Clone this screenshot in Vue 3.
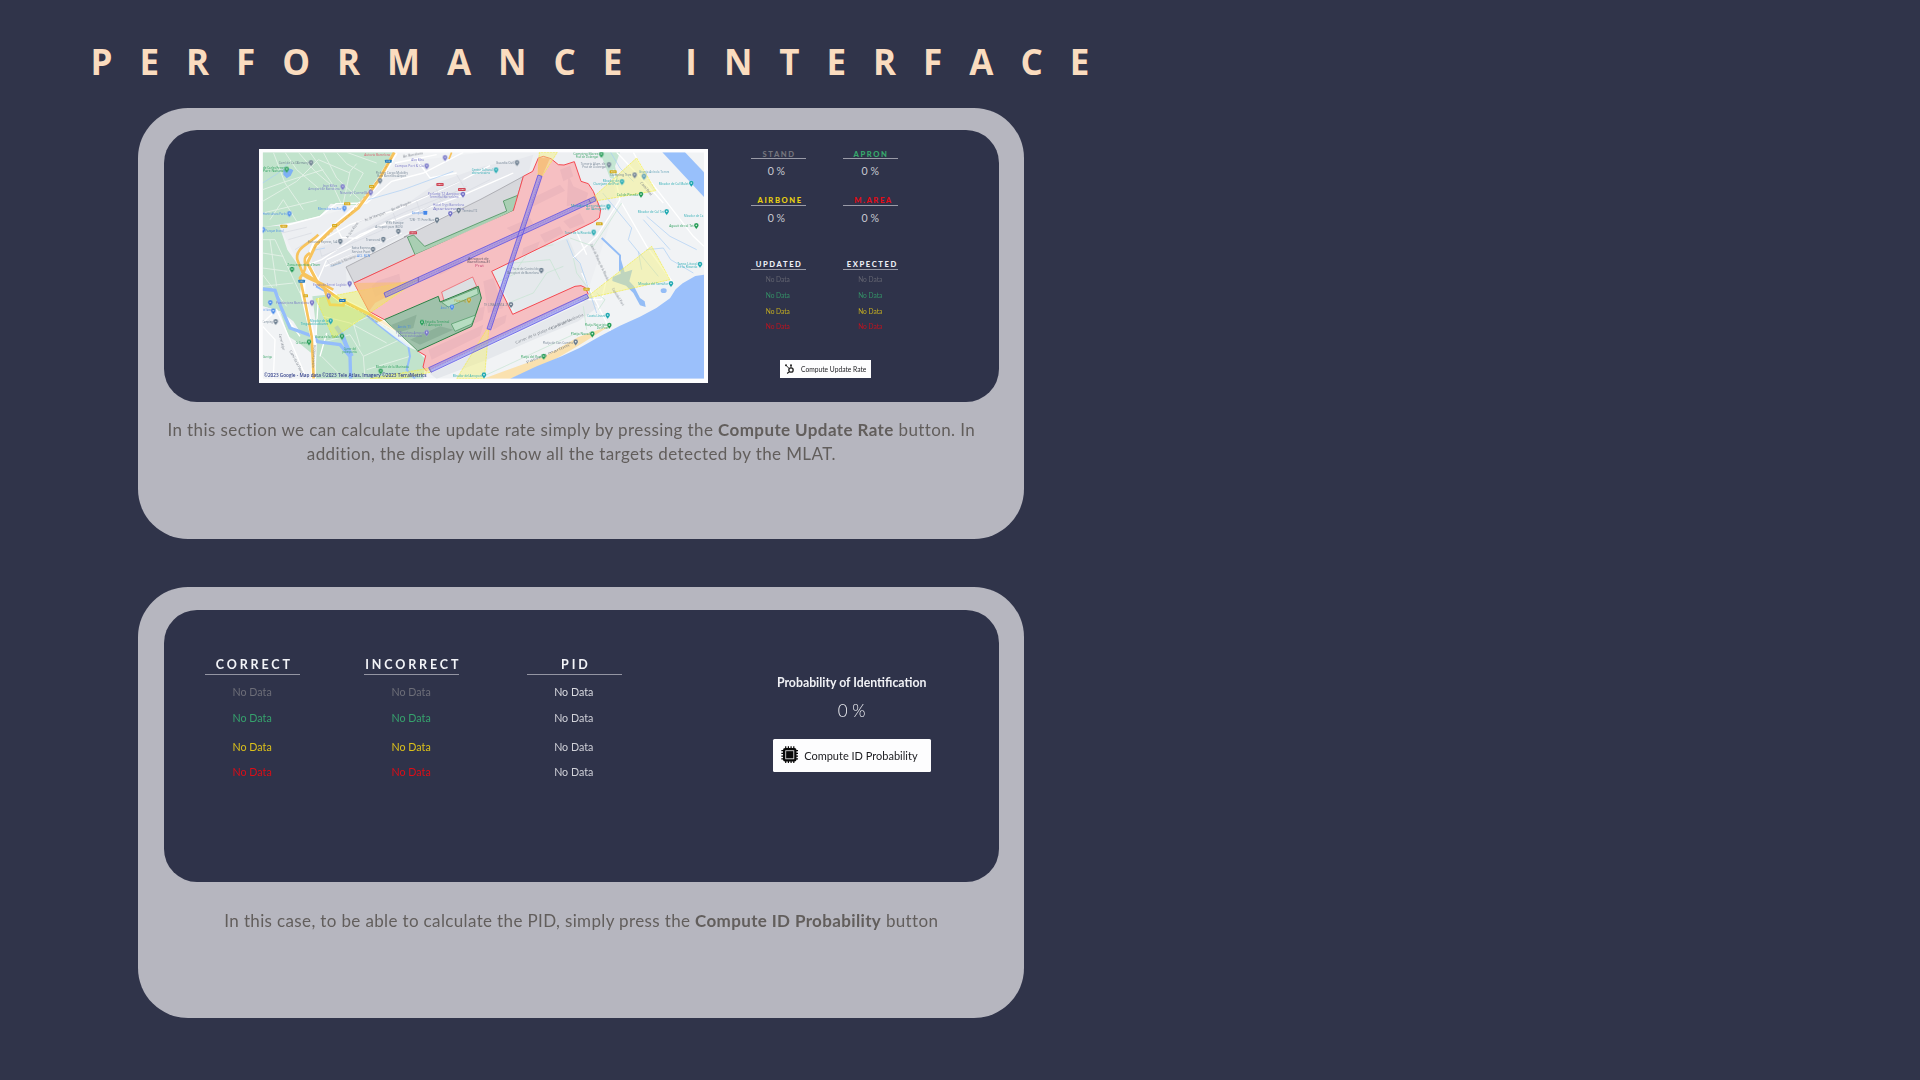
<script setup>
const tones = ['#6d6e78', '#36a26d', '#dcc11b', '#dc0d17']

const rates = [
  { name: 'STAND', color: '#73747c' },
  { name: 'APRON', color: '#36aa6c' },
  { name: 'AIRBONE', color: '#e8cf10' },
  { name: 'M.AREA', color: '#e30b17' }
]
const updates = ['UPDATED', 'EXPECTED']
const idColumns = [
  { name: 'CORRECT', cls: 'correct', colors: tones },
  { name: 'INCORRECT', cls: 'incorrect', colors: tones },
  { name: 'PID', cls: 'pid', colors: ['#d9dae0', '#d0d1d8', '#d0d1d8', '#d0d1d8'] }
]

const teal = '#18a5ae', grey = '#66788a', green = '#1d9850', violet = '#706fc5', sky = '#4286ea'
// [pin x, pin y, colour, label, label x, label baseline, label length]
const places = [
  [183, 70, grey, 'Camí de Ca l’Alemany', 86, 74, 90],
  [110, 90, green, 'de Carles Ferrer', 39, 87, 66],
  [278, 142, violet, 'Jean Miles', 218, 143, 44],
  [362, 159, violet, 'Novotel Cornellà', 269, 164, 84],
  [390, 124, grey, 'Picking Cargo Mobility', 377, 104, 97],
  [530, 80, violet, 'Campus Port & Cia', 434, 83, 88],
  [585, 55, violet, 'Alex Bleu', 484, 65, 38],
  [283, 207, sky, 'Mercabarna-flor', 203, 212, 72],
  [118, 223, sky, 'Horticultura Parés', 38, 227, 72],
  [39, 271, sky, 'Parque litoral', 46, 276, 55],
  [271, 306, grey, 'Esclusius Express, S.A.', 174, 309, 90],
  [445, 276, grey, 'WFS Europe', 407, 254, 54],
  [400, 300, grey, 'Transcoral', 348, 303, 43],
  [369, 330, grey, 'Swiss Express', 305, 329, 56],
  [561, 242, grey, 'T2B · T1 Free Bus', 478, 243, 74],
  [601, 223, violet, 'Hotel Tryp Barcelona', 549, 200, 94],
  [626, 213, grey, 'Terminal T2', 637, 217, 45],
  [639, 165, violet, 'Parking T2 Aeroport', 533, 166, 100],
  [299, 433, violet, 'Espais de Servei Logístic', 189, 438, 101],
  [236, 470, violet, '', 0, 0, 0],
  [186, 490, violet, 'Fundacions Barcelona', 78, 494, 99],
  [126, 390, green, 'Zona esportiva d’Inver', 112, 379, 99],
  [61, 490, sky, '', 0, 0, 0],
  [70, 515, sky, 'de Viladecans', 40, 514, 30],
  [77, 547, grey, 'Camping', 37, 550, 31],
  [242, 545, teal, 'Mirador de la', 180, 547, 55],
  [276, 591, green, 'Bassa de la Vidala', 196, 595, 73],
  [177, 608, green, 'Ca Camins', 137, 612, 34],
  [392, 695, green, 'Mirador de la Marinada', 377, 684, 100],
  [516, 549, green, 'Estadia Terminal', 525, 551, 73],
  [530, 580, violet, 'T1 Barcelona Aeroport', 438, 583, 87],
  [606, 503, sky, 'Àrea T1', 572, 507, 25],
  [657, 482, '#b89b24', 'Pàrquing', 613, 486, 35],
  [702, 707, teal, 'Mirador del Aeroport', 608, 713, 88],
  [738, 92, teal, 'Centre Cultural', 665, 93, 63],
  [801, 70, grey, 'Guardia Civil', 738, 74, 54],
  [1054, 45, green, 'Camping Mares', 970, 47, 75],
  [1077, 76, grey, 'Torneria Alum. de', 992, 77, 74],
  [1116, 127, teal, 'Mirador de', 1058, 127, 49],
  [1154, 107, grey, 'Camping Tres', 1080, 110, 64],
  [1182, 111, '#5097b0', 'Granja Avícola Torres', 1167, 101, 91],
  [1324, 132, teal, 'Mirador de Cal Malet', 1226, 136, 90],
  [1173, 165, green, 'Cal de Pineda', 1100, 169, 65],
  [1250, 217, teal, 'Mirador de Cal Tet', 1163, 221, 79],
  [1339, 259, green, 'Aguait de cal Tet', 1258, 263, 73],
  [1075, 202, teal, 'Mirador Aeronàutic', 963, 202, 103],
  [1031, 279, teal, 'Torre de la Ricarda', 944, 282, 79],
  [1350, 375, teal, 'Tanca Litoral', 1282, 376, 60],
  [1263, 433, teal, 'Mirador del Semàfor', 1165, 437, 90],
  [874, 393, grey, 'Torre de Control de', 787, 391, 79],
  [783, 496, grey, 'TE_LINEA PISTA_25', 702, 500, 74],
  [1073, 528, teal, 'Caseta Llevant', 1012, 531, 54],
  [1078, 558, green, 'Platja Naturista', 1004, 559, 67],
  [1027, 584, green, 'Platja Naval', 962, 587, 57],
  [977, 608, grey, 'Platja de Can Camins', 878, 612, 91],
  [881, 651, green, 'Platja del Prat', 812, 654, 62]
]
// [x, baseline, length, colour, text]
const labels = [
  [343, 49, 78, '#e44f65', 'Autovia Barcelona'], [39, 97, 64, green, 'Parc Natural'],
  [175, 151, 94, violet, 'Aeroport de Barcelona'], [382, 111, 87, grey, 'Best Barcelona Airport'],
  [665, 102, 55, teal, 'dominicains'], [549, 210, 94, violet, 'Apartaments'],
  [538, 175, 88, violet, 'Terminal Barcelona'], [376, 264, 82, grey, 'Aeroport parc (BCN)'],
  [305, 339, 56, grey, 'Service Punt'], [321, 353, 40, sky, 'ACL BCN'],
  [486, 224, 33, sky, 'Aeroport'], [152, 556, 83, teal, 'Tingaladoladoures'],
  [281, 630, 38, green, 'Carrer del'], [277, 639, 44, green, 'poliesportiu'],
  [521, 560, 55, green, 'T1 Aeroport'], [443, 565, 40, sky, 'Accés T1'], [443, 591, 73, violet, 'Estacio autobusos'],
  [654, 361, 62, '#4a4555', 'Aeroport de'], [652, 371, 67, '#4a4555', 'Barcelona-El'], [675, 381, 27, '#c04070', 'Prat'],
  [1030, 136, 78, teal, 'Clarejaen del Prat'], [997, 86, 72, grey, 'Prat de Llobregat'],
  [977, 54, 68, green, 'Prat de Llobregat'], [1008, 212, 60, teal, 'de l’Aeroport'],
  [1282, 386, 60, teal, 'de la Ricarda'], [1302, 233, 58, teal, 'Mirador de Ca'],
  [770, 402, 97, grey, 'l’Aeroport de Barcelona'], [1040, 569, 35, green, 'Del Prat'], [38, 654, 28, green, 'Garriga']
]
const shields = [
  [405, 60, 20, '#287bb9'], [145, 420, 20, '#287bb9'], [267, 478, 20, '#287bb9'],
  [282, 188, 19, '#d8ac20'], [246, 253, 16, '#d8ac20'], [91, 255, 21, '#d8ac20'], [357, 136, 16, '#d8ac20'],
  [160, 464, 14, '#d8ac20'], [559, 130, 22, '#ce4655'], [624, 145, 23, '#ce4655'], [478, 275, 23, '#ce4655'],
  [1079, 92, 21, '#d3ad20'], [1038, 248, 20, '#d3ad20'], [1000, 444, 19, '#d3ad20']
]
// [x, baseline, angle, length, text]
const streets = [
  [294, 296, -55, 55, 'Av. de les Alberes'], [345, 245, -20, 66, 'Av. de l’Aeroport'], [426, 214, -22, 62, 'Av. del Progrés'],
  [245, 382, -22, 80, 'Camí de la Muntanya'], [460, 54, -10, 60, 'Av. Barcelona'], [86, 584, 76, 50, 'Carrer Major'],
  [118, 635, 62, 74, 'Camí de la Pava'], [192, 685, -85, 70, 'Autovia Castelldefels'],
  [798, 613, -23, 180, 'Carrer de la platja de la Ricarda'], [905, 570, -24, 105, 'Camí de València'],
  [1020, 315, 65, 120, 'Camí de l’Estany de la Ricarda'], [1085, 448, 58, 60, 'Camí del Port'],
  [1170, 130, 50, 50, 'Camí Real'], [830, 672, -22, 140, 'Passeig marítim']
]
</script>

<template>
  <main class="page">
    <h1>PERFORMANCE INTERFACE</h1>

    <section class="card">
      <div class="panel rate-panel">
        <svg class="map" viewBox="27 28 1347 702" preserveAspectRatio="none">
          <defs>
            <clipPath id="mapclip"><rect x="38" y="38" width="1324" height="679" /></clipPath>
          </defs>
          <rect x="27" y="28" width="1347" height="702" fill="#fdfdfe" />
          <g clip-path="url(#mapclip)">
            <rect x="38" y="38" width="1324" height="679" fill="#f1f3f5" />
            <path d="M190 235 330 195 440 70 700 38H1080L1100 190 1010 465 540 700 350 520 190 435 130 340 90 262Z" fill="#edeff2" />
            <path d="M180 330 280 300 430 220 560 130 700 80 800 60 850 45 830 120 700 175 460 285 288 382 290 440 200 430Z" fill="#e6e8ed" />
            <path d="M38 38H435L365 160 325 196 280 195 242 192 210 230 130 248 38 263Z" fill="#c1e3cc" />
            <path d="M38 262 88 258 112 330 150 385 158 430 170 500 196 600 196 640 165 600 130 545 90 515 38 500Z" fill="#c1e3cc" />
            <path d="M187 470 230 465 357 510 403 540 503 634 527 660 520 717H196L202 590Z" fill="#c1e3cc" />
            <path d="M400 590 500 634 527 660 520 690 340 717H300Z" fill="#c1e3cc" />
            <path d="M38 500 90 515 120 575 165 600 192 635 198 717H38Z" fill="#f1f3f5" />
            <path d="M90 515 130 570 193 602 190 645 150 612 115 590Z" fill="#c1e3cc" />
            <path d="M1050 38H1110L1095 80 1105 120 1080 115Z" fill="#c5e6d3" />
            <path d="M726 395 910 310 955 295 1045 500 975 480 800 525Z" fill="#e5e9ec" />
            <path d="M540 702 1018 480 1040 505 985 545 850 600 700 665 560 717Z" fill="#e5e8ec" />

            <g fill="none" stroke="#e1f0e5" stroke-width="3">
              <path d="M70 38 105 130 160 210M105 38 140 90 205 145M145 38 195 95 260 150M180 38 245 130 275 195M38 150 100 128 220 90M38 185 140 125 205 60M38 220 200 182M220 38 260 115 330 180M260 38 290 72 340 100 300 170M290 38 380 70M320 72 300 95 280 190M205 60 300 100M60 240 100 180 140 245M38 300 75 300 150 460M38 340 100 350M38 385 112 395M60 300 80 440M38 440 130 430M38 405 110 500" />
              <path d="M210 610 300 585 340 650 345 717M340 650 450 600 460 560M330 620 310 550 360 530M215 650 265 700M350 690 480 650M220 530 300 550 410 610" />
            </g>
            <g fill="none" stroke="#fff" stroke-width="4">
              <path d="M90 262 210 230 258 192 350 190 425 125 520 100 640 38M435 70 560 45M165 355 220 300 300 255 440 210 620 130 720 78M175 375 215 360 330 285 460 230 630 170 790 100M225 380 455 280M200 430 230 360 305 325M255 255 275 293 320 296 360 275 430 240M500 60 540 115 620 100M38 550 80 510 120 600 170 717M38 560 75 600 70 717M100 520 150 590M205 475 190 717M230 580 210 650M1150 38 1190 110 1330 290 1362 320M1100 38 1150 90 1240 190M1115 190 1190 320 1270 430M970 255 1010 345M995 400 1090 590M1015 480 1055 480 1068 425M1090 90 1110 180 1040 290 970 355" />
            </g>
            <g fill="none" stroke="#d6dae1" stroke-width="2">
              <path d="M210 330 215 350 400 270M230 360 240 375 440 285M320 250 500 180 640 120M350 270 470 215 620 155M430 220 440 250 540 200M500 185 510 215 590 175M560 150 570 180 650 140M620 105 650 155 720 120M95 280 170 263M115 300 185 280M135 330 175 305" />
            </g>
            <g fill="none" stroke="#a9cdf5" stroke-width="2">
              <path d="M38 130 85 100 115 70M355 180 460 150 610 95M175 335 225 325M240 380 275 370M1082 38 1110 85 1150 125M1058 160 1145 265 1135 300 1225 410M1180 240 1260 330M1190 330 1240 325 1262 360 1330 400M1190 230 1260 290 1340 330M950 300 970 350 990 370 1040 520M1165 335 1175 390" />
            </g>
            <path d="M38 448 75 452 92 500 120 565 190 590 203 606 270 615 300 650 302 717" fill="none" stroke="#94bdfb" stroke-width="10" />
            <path d="M198 440 330 510 385 555 430 590 475 620 480 650 470 690 495 717" fill="none" stroke="#94bdfb" stroke-width="6" />
            <path d="M258 560 278 590 290 620 305 650" fill="none" stroke="#94bdfb" stroke-width="13" />
            <path d="M100 90Q120 82 130 92L122 108 110 116 100 105Z" fill="#7eb0f5" />
            <path d="M1237 38H1305L1362 98V172Z" fill="#98c0fb" />
            <path d="M1055 295 1110 347V395" fill="none" stroke="#94bdf6" stroke-width="6" />
            <path d="M1088 412 1112 402 1110 350 1124 398 1147 390 1138 425 1152 440 1170 475 1184 485 1187 502 1170 497 1150 460 1128 438 1087 424Z" fill="#94bdf6" />
            <ellipse cx="1241" cy="453" rx="9" ry="7" fill="#94bdf6" />
            <path d="M700 717 880 652 985 592 1080 558 985 618 900 668 780 717Z" fill="#fae1af" />
            <path d="M1362 405 1336 409 1298 431 1277 449 1260 476 1219 505 1170 531 1110 558 1050 590 988 625 935 650 860 680 780 717H1362Z" fill="#9bc0fb" />

            <g fill="none" stroke="#fff" stroke-width="14">
              <path d="M437 38 385 125 340 185 260 255 195 310 170 370 205 430 270 480 357 520 440 570M160 430 158 460 190 600 190 717" />
            </g>
            <g fill="none" stroke="#f7c35c">
              <path d="M433 38 387 120 325 205 253 262 198 315 172 370 205 433 270 480 357 523 445 575" stroke-width="9" />
              <path d="M142 360C135 325 175 315 205 285M142 360 158 400 210 430 250 450M180 340C145 360 185 375 150 415L164 480 185 590 191 717M158 405C190 430 210 420 222 445L240 495 280 497 285 475" stroke-width="8" />
              <path d="M605 38 597 58" stroke-width="5" />
            </g>
            <path d="M425 55 385 120 290 235 190 328M280 485 420 570" fill="none" stroke="#d59b39" stroke-width="1.5" stroke-dasharray="9 5" />

            <g fill="none" stroke="#c4e4d0" stroke-width="2">
              <path d="M735 430 790 405 840 330 910 315M775 490 850 460 890 400 940 380M790 370 900 360 930 420M970 355 980 400 1010 440M960 295 1030 320 1070 260 1115 190M700 710 850 640 980 580M1000 500 1010 570M1040 460 1065 480 1045 510" />
            </g>

            <path d="M288 382 470 290 462 292 690 180 750 148 820 110 790 213 312 430Z" fill="#d2d3d8" fill-opacity=".85" stroke="#95969b" stroke-width="2" />
            <path d="M472 292 491 286 524 320 690 248 770 214 760 184 803 167 801 188 790 213 690 262 495 345Z" fill="#a9cfb3" stroke="#37864c" stroke-width="2" />
            <path d="M312 430 495 345 690 258 790 213 820 110 848 95 865 55 880 50 903 57 925 75 942 76 973 66 993 125 1015 132 1030 155 1052 210 1048 235 1030 247 725 395 788 524 975 440 993 438 1006 444 1015 464 530 695 519 682 527 648 503 634 665 560 694 475 668 412 575 457 583 485 570 487 565 470 403 540 357 515Z" fill="#f6bfc2" />
            <g fill="#edb7bd">
              <path d="M365 440 382 424 448 402 453 434 375 472ZM840 178 930 135 945 153 850 200ZM930 90 960 78 970 110 940 125ZM870 285 930 260 940 280 885 310ZM940 245 990 220 1005 250 960 267ZM820 325 870 305 860 330 815 347ZM540 565 590 540 600 580 560 590ZM650 520 705 500 698 540 664 555ZM700 425 730 415 760 505 714 520ZM535 630 700 555 690 588 545 660ZM720 545 770 525 765 550 730 570ZM955 105 970 140 1015 160 1005 190 950 200ZM770 265 840 235 850 252 790 280ZM560 390 630 360 640 370 570 405Z" />
            </g>
            <path d="M312 430 495 345M790 213 820 110 848 95 865 55 880 50 903 57 925 75 942 76 973 66 993 125 1015 132 1030 155 1052 210 1048 235 1030 247 725 395 788 524 975 440 993 438 1006 444 1015 464M530 695 519 682 527 648 503 634M403 540 357 515 312 430" fill="none" stroke="#f44951" stroke-width="3" />
            <path d="M575 457 668 412 680 440 583 487Z" fill="#dcdfe2" stroke="#ef4852" stroke-width="2" />
            <path d="M403 540 565 470 570 487 685 440 694 475 665 560 503 634Z" fill="#9fc1aa" stroke="#2d8045" stroke-width="3" />
            <path d="M575 488 682 445 685 463 595 502ZM604 553 677 526 665 553 615 575Z" fill="#b7ddc2" stroke="#47945e" stroke-width="2" />
            <path d="M425 555 500 525 490 565 440 580ZM480 600 570 560 610 570 510 615Z" fill="#8db19a" />
            <path d="M403 540 503 634 470 620 380 550Z" fill="#fff" fill-opacity=".7" />

            <g stroke="#f3ed43" stroke-width="2" stroke-dasharray="7 2" fill="#f4f17a" fill-opacity=".45">
              <path d="M198 478 505 420 250 595Z" fill="#eaf154" />
              <path d="M1013 188 1160 55 1217 153ZM1003 478 1205 320 1260 420ZM864 106 868 38H922L876 110ZM710 570 620 717H703L716 572ZM540 685 545 697 450 717H360Z" />
            </g>
            <path d="M312 430 455 428 505 420 375 490 357 515Z" fill="#f8bd74" fill-opacity=".65" />
            <path d="M865 55 900 56 876 110 864 106Z" fill="#f6b776" fill-opacity=".75" />

            <g fill="#8787e7" fill-opacity=".6" stroke="#4a40e9" stroke-width="2">
              <path d="M402 460 1033 171 1038 183 407 473ZM864 106 876 110 722 571 711 567ZM536 684 1010 463 1016 475 543 698Z" />
            </g>
            <path d="M505 412V427M1016 178 1022 191" stroke="#6652a4" stroke-width="2" />
            <path d="M872 110 717 569M412 463 1034 177M540 690 1012 470" stroke="#7365e8" stroke-width="1.2" fill="none" stroke-dasharray="5 3" />

            <g v-for="(s, i) in shields" :key="'s' + i">
              <rect :x="s[0]" :y="s[1]" :width="s[2]" height="9" rx="2" :fill="s[3]" />
              <path :d="`M${s[0] + 4} ${s[1] + 4.5}h${s[2] - 8}`" stroke="#fff" stroke-width="3" stroke-dasharray="3 1" opacity=".6" />
            </g>
            <g class="map-text">
              <text v-for="(t, i) in streets" :key="'t' + i" :transform="`translate(${t[0]} ${t[1]}) rotate(${t[2]})`" :textLength="t[3]" lengthAdjust="spacingAndGlyphs" fill="#6d747e">{{ t[4] }}</text>
              <text v-for="(l, i) in labels" :key="'l' + i" :x="l[0]" :y="l[1]" :textLength="l[2]" lengthAdjust="spacingAndGlyphs" :fill="l[3]">{{ l[4] }}</text>
              <template v-for="(p, i) in places" :key="'p' + i">
                <text v-if="p[3]" :x="p[4]" :y="p[5]" :textLength="p[6]" lengthAdjust="spacingAndGlyphs" :fill="p[2]">{{ p[3] }}</text>
              </template>
            </g>
            <g v-for="(p, i) in places" :key="'m' + i" :transform="`translate(${p[0]} ${p[1]})`">
              <path d="M0 10C-2 5-7 3-7-2A7 7 0 0 1 7-2C7 3 2 5 0 10Z" :fill="p[2]" stroke="#fff" stroke-opacity=".6" />
              <circle cy="-2" r="2.6" fill="#fff" fill-opacity=".8" />
            </g>
            <rect x="520" y="213" width="12" height="12" rx="2" fill="#4286ea" />
            <text class="credit" x="42" y="711" textLength="488" lengthAdjust="spacingAndGlyphs">©2023 Google - Map data ©2023 Tele Atlas, Imagery ©2023 TerraMetrics</text>
          </g>
        </svg>

        <div class="stats">
          <div class="rates">
            <div v-for="r in rates" :key="r.name" class="rate">
              <b :style="{ color: r.color }"><span>{{ r.name }}</span></b>
              <span class="value">0 %</span>
            </div>
          </div>
          <div class="updates">
            <div v-for="u in updates" :key="u" class="update">
              <b><span>{{ u }}</span></b>
              <span v-for="(c, i) in tones" :key="c" :class="'r' + i" :style="{ color: c }">No Data</span>
            </div>
          </div>
          <button class="small-btn">
            <svg viewBox="0 0 27 29"><circle cx="18" cy="18" r="6.5" fill="none" stroke="#222" stroke-width="4" /><path d="M18 11V4M13 14 3 4M13 23 8 28" stroke="#222" stroke-width="3" /><circle cx="3" cy="4" r="3" fill="#222" /><circle cx="18" cy="4" r="3" fill="#222" /><circle cx="8" cy="27" r="2.4" fill="#222" /></svg>
            <span>Compute Update Rate</span>
          </button>
        </div>
      </div>
      <p class="first"><span class="l1">In this section we can calculate the update rate simply by pressing the <b>Compute Update Rate</b> button. In</span><br><span class="l2">addition, the display will show all the targets detected by the MLAT.</span></p>
    </section>

    <section class="card second-card">
      <div class="panel id-panel">
        <div v-for="c in idColumns" :key="c.name" class="id-col" :class="c.cls">
          <b><span>{{ c.name }}</span></b>
          <span v-for="(k, i) in c.colors" :key="i" :class="'r' + i" :style="{ color: k }">No Data</span>
        </div>
        <div class="prob">
          <b>Probability of Identification</b>
          <span class="big">0 %</span>
          <button>
            <svg viewBox="0 0 52 52"><path d="M14 1v50M22 1v50M30 1v50M38 1v50M1 14h50M1 22h50M1 30h50M1 38h50" stroke="#090909" stroke-width="3.6" /><rect x="6" y="6" width="40" height="40" rx="6" fill="#090909" /><rect x="14" y="14" width="24" height="24" fill="none" stroke="#ddd" stroke-width="2.6" /></svg>
            <span>Compute ID Probability</span>
          </button>
        </div>
      </div>
      <p class="second"><span class="l3">In this case, to be able to calculate the PID, simply press the <b>Compute ID Probability</b> button</span></p>
    </section>
  </main>
</template>

<style>
body { margin: 0; background: #30344a; }
</style>

<style scoped>
.page { width: 1920px; height: 1080px; box-sizing: border-box; padding: 38px 0 0 90.5px; overflow: hidden; background: #30344a; font-family: Lato, "Liberation Sans", sans-serif; }
h1 { margin: 0 0 22px; height: 48px; font: 700 35px/48px "Open Sans", sans-serif; letter-spacing: 26.95px; color: #fadcbf; white-space: nowrap; }
.card { margin-left: 47.9px; width: 885.9px; height: 431px; box-sizing: border-box; padding: 22px 25.5px 0; border-radius: 50px; background: #b6b6bf; }
.second-card { margin-top: 47.5px; padding-top: 23.2px; }
.panel { height: 272px; border-radius: 33px; background: #2f334a; display: flex; }
.map { flex: none; width: 449px; height: 234px; margin: 19.3px 0 0 95.2px; }
.map-text { font: 11px "Noto Sans", sans-serif; opacity: .85; }
.credit { font: 600 15px "Open Sans", sans-serif; fill: #33408b; }

.stats { margin: 18.6px 0 0 42.6px; width: 147px; }
.rates, .updates { display: grid; grid-template-columns: 55.3px 55.3px; column-gap: 36.6px; }
.rate { height: 46.8px; display: flex; flex-direction: column; align-items: center; }
.rate b, .update b { width: 100%; height: 9.8px; border-bottom: 1px solid #9a9ba7; display: flex; justify-content: center; font-size: 7.6px; line-height: 10px; letter-spacing: 1.6px; font-weight: 900; white-space: nowrap; }
.rate b span, .update b span { margin-right: -1.6px; }
.rate:nth-child(3) b span { margin-right: -3.6px; }
.rate:nth-child(4) b span { margin-right: -6.6px; }
.update:nth-child(2) b span { margin-right: -4.2px; }
.value { margin: 5.5px 4px 0 0; font-size: 10.6px; line-height: 13px; color: #c8c9d1; }
.rate:nth-child(even) .value { margin-right: 0; }
.updates { margin-top: 17.3px; }
.update { display: flex; flex-direction: column; align-items: center; font-size: 6.6px; line-height: 8px; }
.update b { color: #eceef4; }
.update > span { margin-right: 1px; opacity: .85; }
.update:nth-child(2) > span { margin-right: 0; }
.update .r0 { margin-top: 5px; } .update .r1 { margin-top: 7.5px; } .update .r2 { margin-top: 8.5px; } .update .r3 { margin-top: 6.5px; }
button { border: 0; padding: 0; background: #fdfdfe; display: flex; align-items: center; color: #1b1b1f; font-family: inherit; white-space: nowrap; }
.small-btn { width: 91px; height: 18.4px; margin: 29.9px 0 0 29.4px; font-size: 6.7px; }
.small-btn svg { width: 9px; height: 9.7px; margin: 0 7px 0 5px; }

p { margin: 0; text-align: center; color: #625e5c; font-size: 17px; line-height: 24px; white-space: nowrap; }
.first { margin: 16px 20px 0 0; }
.second { margin: 27px 0 0; }
.l1, .l2 { letter-spacing: .4px; }
.l3 { letter-spacing: .36px; }

.id-col { margin-top: 46px; width: 95.3px; display: flex; flex-direction: column; align-items: center; font-size: 10.7px; line-height: 14px; }
.id-col b { width: 100%; height: 18px; border-bottom: 1.7px solid #9495a3; display: flex; justify-content: center; font-size: 12.5px; line-height: 18px; letter-spacing: 2.85px; color: #f2f3f7; white-space: nowrap; }
.id-col b span { margin-right: -2.85px; }
.correct { margin-left: 41.3px; } .incorrect { margin-left: 63.7px; } .pid { margin-left: 67.3px; }
.id-col .r0 { margin-top: 10px; } .id-col .r1 { margin-top: 12.3px; } .id-col .r2 { margin-top: 14.7px; } .id-col .r3 { margin-top: 11px; }
.id-col > span { margin-right: 1.4px; }
.prob { margin: 65px 0 0 150.6px; width: 158px; display: flex; flex-direction: column; align-items: center; color: #f0f1f5; }
.prob > b { font-size: 12.3px; line-height: 16px; white-space: nowrap; }
.big { margin-top: 10px; font-size: 17px; line-height: 20px; font-weight: 300; }
.prob button { width: 158px; height: 33px; margin-top: 18.3px; border-radius: 1.5px; font-size: 11px; }
.prob button svg { width: 17.5px; height: 17.5px; margin: -2px 6px 0 8px; }
</style>
